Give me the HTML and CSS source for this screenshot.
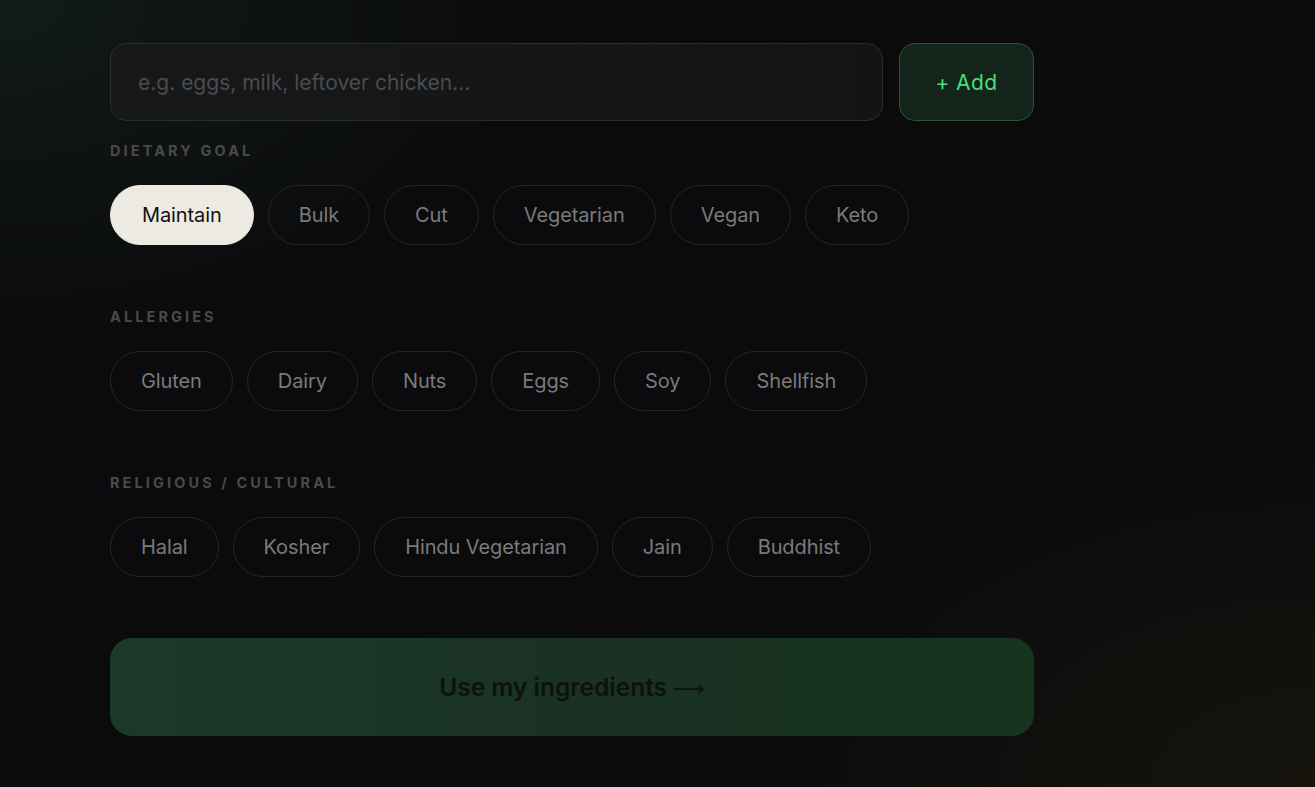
FILE: index.html
```html
<!DOCTYPE html>
<html lang="en">
<head>
<meta charset="utf-8">
<title>Ingredients</title>
<link rel="stylesheet" href="styles.css">
</head>
<body>
<main class="page">
  <div class="panel">
    <div class="input-row">
      <div class="field"><span class="placeholder">e.g. eggs, milk, leftover chicken...</span></div>
      <button class="add-btn">+ Add</button>
    </div>

    <section class="group first">
      <h3 class="label">DIETARY GOAL</h3>
      <div class="chips">
        <span class="chip active">Maintain</span>
        <span class="chip">Bulk</span>
        <span class="chip">Cut</span>
        <span class="chip">Vegetarian</span>
        <span class="chip">Vegan</span>
        <span class="chip">Keto</span>
      </div>
    </section>

    <section class="group">
      <h3 class="label">ALLERGIES</h3>
      <div class="chips">
        <span class="chip">Gluten</span>
        <span class="chip">Dairy</span>
        <span class="chip">Nuts</span>
        <span class="chip">Eggs</span>
        <span class="chip">Soy</span>
        <span class="chip">Shellfish</span>
      </div>
    </section>

    <section class="group">
      <h3 class="label">RELIGIOUS / CULTURAL</h3>
      <div class="chips">
        <span class="chip">Halal</span>
        <span class="chip">Kosher</span>
        <span class="chip">Hindu Vegetarian</span>
        <span class="chip">Jain</span>
        <span class="chip">Buddhist</span>
      </div>
    </section>

    <button class="cta">Use my ingredients <span class="arrow">⟶</span></button>
  </div>
</main>
</body>
</html>
```

FILE: styles.css
```css
* { box-sizing: border-box; }
html, body { margin: 0; height: 100%; }
body {
  background:
    radial-gradient(ellipse 700px 450px at 0px 0px, rgba(24, 44, 30, 0.5), transparent 75%),
    radial-gradient(ellipse 800px 480px at 1315px 787px, rgba(32, 28, 14, 0.55), transparent 75%),
    #0b0b0d;
  font-family: Inter, "DejaVu Sans", sans-serif;
  overflow: hidden;
}
.page { padding: 43px 0 0 110px; }
.panel { width: 924px; display: flex; flex-direction: column; }
.input-row { display: flex; gap: 16px; height: 78px; }
.field {
  flex: 1;
  border: 1px solid #2b2c2d;
  border-radius: 16px;
  background: linear-gradient(90deg, #17181a, #131415);
  display: flex; align-items: center;
  padding-left: 27px;
}
.placeholder { color: #4b4c4d; font-size: 21px; letter-spacing: 0; }
.add-btn {
  width: 135px;
  border: 1px solid #2a5636;
  border-radius: 16px;
  background: #13251a;
  color: #4ade80;
  font-family: inherit;
  font-size: 21px;
  letter-spacing: 0.4px;
}
.group { margin-top: 65px; }
.group.first { margin-top: 23px; }
.label {
  margin: 0 0 27px;
  font-size: 14.5px;
  line-height: 14px;
  font-weight: 700;
  letter-spacing: 3.1px;
  color: #4a4a4b;
}
.chips { display: flex; gap: 14px; }
.chip {
  height: 60px;
  padding: 0 30px;
  border: 1px solid #252527;
  border-radius: 30px;
  display: inline-flex; align-items: center;
  color: #7a7a7b;
  font-size: 20px;
  letter-spacing: -0.1px;
}
.chip.active {
  background: #ede9e3;
  border-color: #ede9e3;
  color: #111111;
  padding: 0 31px;
}
.cta {
  margin-top: 61px;
  height: 98px;
  border: none;
  border-radius: 22px;
  background: linear-gradient(90deg, #1c3a29, #1a3123 55%, #17341f);
  color: #0c120e;
  font-family: inherit;
  font-size: 24.5px;
  font-weight: 600;
  letter-spacing: 0;
}
.arrow { font-weight: 400; font-family: "DejaVu Sans", sans-serif; font-size: 22px; }
```
